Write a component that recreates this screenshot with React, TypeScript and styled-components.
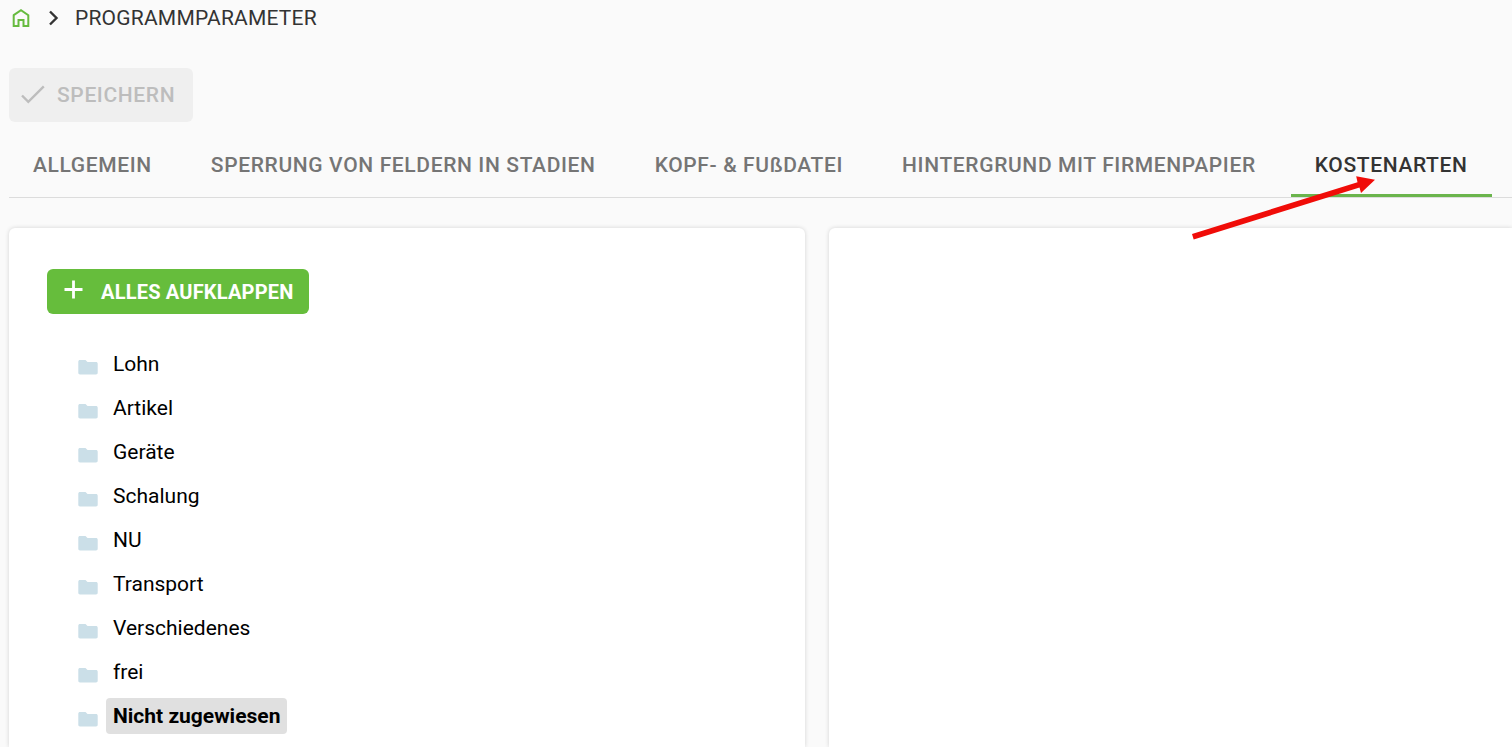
import React, { useState } from "react";
import styled, { createGlobalStyle } from "styled-components";

const GlobalStyle = createGlobalStyle`
  * { box-sizing: border-box; }
  body {
    margin: 0;
    background: #fafafa;
    color: #000;
    font-family: Roboto, "Liberation Sans", sans-serif;
    font-size: 21px;
    overflow-x: hidden;
  }
  button { font: inherit; border: 0; margin: 0; }
`;

const Page = styled.div`
  min-height: 100vh;
  padding-left: 9px;
  display: flex;
  flex-direction: column;
`;

const Breadcrumb = styled.nav`
  display: flex;
  align-items: center;
  height: 36px;
  color: #333;
`;

const HomeLink = styled.a`
  display: flex;
  width: 24px;
  height: 24px;
  color: #66bb3f;
`;

const Separator = styled.svg`
  width: 24px;
  height: 24px;
  margin: 0 10px 0 8px;
`;

const Current = styled.span`
  line-height: 24px;
  letter-spacing: 0.01em;
`;

const SaveButton = styled.button`
  align-self: flex-start;
  display: flex;
  align-items: center;
  gap: 10px;
  height: 54px;
  margin-top: 32px;
  padding: 0 18px 0 10px;
  border-radius: 6px;
  background: #efefef;
  color: #bdbdbd;
  font-weight: 500;
  letter-spacing: 0.03em;
`;

const TabBar = styled.div`
  display: flex;
  gap: 11px;
  height: 76px;
  border-bottom: 1px solid #dcdcdc;
  padding-top: 14px;
`;

const Tab = styled.button<{ $active: boolean }>`
  position: relative;
  flex: none;
  padding: 0 24px;
  background: none;
  white-space: nowrap;
  cursor: pointer;
  font-weight: 500;
  letter-spacing: 0.03em;
  color: ${(p) => (p.$active ? "#333" : "#757575")};
  border-bottom: 3px solid ${(p) => (p.$active ? "#6ab44c" : "transparent")};
`;

const Arrow = styled.svg`
  position: absolute;
  left: -100px;
  top: 36px;
  width: 190px;
  height: 70px;
  z-index: 1;
  pointer-events: none;
`;

const Panels = styled.main`
  flex: 1;
  display: grid;
  grid-template-columns: 7fr 6fr;
  gap: 24px;
  margin-top: 30px;
`;

const Panel = styled.section`
  padding: 41px 38px 8px;
  border-radius: 6px 6px 0 0;
  background: #fff;
  box-shadow: 0 0 4px rgba(0, 0, 0, 0.16);

  &:last-child {
    border-top-right-radius: 0;
  }
`;

const ExpandButton = styled.button`
  display: flex;
  align-items: center;
  gap: 14px;
  height: 45px;
  padding: 0 15px 0 14px;
  border-radius: 6px;
  background: #66bd3c;
  color: #fff;
  font-weight: 700;
  font-size: 20px;
  letter-spacing: 0.01em;
  cursor: pointer;
`;

const PlusIcon = styled.svg`
  width: 26px;
  height: 26px;
  margin-bottom: 4px;
`;

const Tree = styled.ul`
  list-style: none;
  margin: 28px 0 0;
  padding: 0 0 0 29px;
`;

const TreeItem = styled.li`
  display: flex;
  align-items: center;
  gap: 6px;
  height: 44px;
`;

const FolderIcon = styled.svg`
  width: 24px;
  height: 24px;
  margin-top: 6px;
  fill: #cbdfe8;
`;

const NodeButton = styled.button<{ $selected: boolean }>`
  height: 36px;
  padding: 0 7px;
  border-radius: 4px;
  cursor: pointer;
  color: #000;
  font-weight: ${(p) => (p.$selected ? 700 : 400)};
  background: ${(p) => (p.$selected ? "#e0e0e0" : "transparent")};
`;

const tabs = [
  "ALLGEMEIN",
  "SPERRUNG VON FELDERN IN STADIEN",
  "KOPF- & FUßDATEI",
  "HINTERGRUND MIT FIRMENPAPIER",
  "KOSTENARTEN",
];

const costTypes = [
  "Lohn",
  "Artikel",
  "Geräte",
  "Schalung",
  "NU",
  "Transport",
  "Verschiedenes",
  "frei",
  "Nicht zugewiesen",
];

export default function App() {
  const [activeTab, setActiveTab] = useState("KOSTENARTEN");
  const [selected, setSelected] = useState("Nicht zugewiesen");

  return (
    <Page>
      <GlobalStyle />
      <Breadcrumb aria-label="Breadcrumb">
        <HomeLink href="#" aria-label="Home">
          <svg viewBox="0 0 24 24" width="24" height="24" fill="none" stroke="currentColor" strokeWidth="2">
            <path d="M4.700 9.200 12 4.200l7.300 5v10.800H14.500v-6h-5v6H4.700z" />
          </svg>
        </HomeLink>
        <Separator viewBox="0 0 24 24" fill="none" stroke="currentColor" strokeWidth="2.4" aria-hidden="true">
          <path d="m9 5.500 6.500 6.500L9 18.500" />
        </Separator>
        <Current>PROGRAMMPARAMETER</Current>
      </Breadcrumb>

      <SaveButton disabled>
        <svg viewBox="0 0 28 28" width="28" height="28" fill="none" stroke="currentColor" strokeWidth="2.4" aria-hidden="true">
          <path d="m3 14.500 6.300 6.300L24.800 5.300" />
        </svg>
        SPEICHERN
      </SaveButton>

      <TabBar role="tablist">
        {tabs.map((t) => (
          <Tab key={t} role="tab" aria-selected={t === activeTab} $active={t === activeTab} onClick={() => setActiveTab(t)}>
            {t}
            {t === "KOSTENARTEN" && (
              <Arrow viewBox="0 0 190 70" aria-hidden="true">
                <path fill="#f00c08" d="M1 62 166.500 10.200l-1.300-6L184 7.800 170 21l-1.500-5.500L2.700 67.500z" />
              </Arrow>
            )}
          </Tab>
        ))}
      </TabBar>

      <Panels>
        <Panel>
          <ExpandButton>
            <PlusIcon viewBox="0 0 26 26" fill="none" stroke="currentColor" strokeWidth="2.8" aria-hidden="true">
              <path d="M12.500 3.500v18M3.500 12.500h18" />
            </PlusIcon>
            ALLES AUFKLAPPEN
          </ExpandButton>
          <Tree>
            {costTypes.map((c) => (
              <TreeItem key={c}>
                <FolderIcon viewBox="0 0 24 24" aria-hidden="true">
                  <path d="M4 5h5.500L11.500 7H20c1 0 1.700.7 1.700 1.700v9.100c0 1-.7 1.700-1.700 1.700H4c-1 0-1.700-.7-1.700-1.700V6.700C2.300 5.700 3 5 4 5z" />
                </FolderIcon>
                <NodeButton $selected={c === selected} onClick={() => setSelected(c)}>
                  {c}
                </NodeButton>
              </TreeItem>
            ))}
          </Tree>
        </Panel>
        <Panel />
      </Panels>
    </Page>
  );
}
